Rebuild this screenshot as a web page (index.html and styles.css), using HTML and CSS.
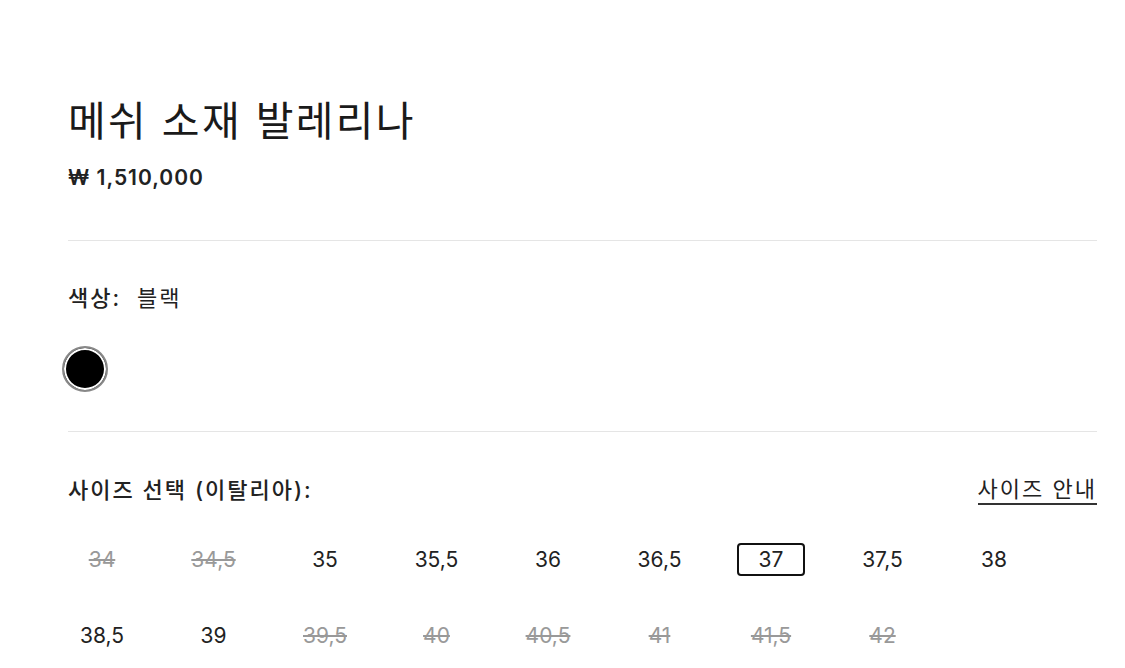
FILE: index.html
```html
<!DOCTYPE html>
<html lang="ko">
<head>
    <meta charset="UTF-8">
    <meta name="viewport" content="width=device-width, initial-scale=1.0">
    <title>메쉬 소재 발레리나</title>
    <link rel="stylesheet" href="styles.css">
</head>
<body>
    <div class="product">
        <h1 class="title">메쉬 소재 발레리나</h1>
        <p class="price">₩ 1,510,000</p>

        <div class="section colors">
            <p class="label">색상:&nbsp; <span class="value">블랙</span></p>
            <button class="swatch" aria-label="블랙"></button>
        </div>

        <div class="section sizes">
            <div class="sizes-head">
                <p class="label">사이즈 선택 (이탈리아):</p>
                <a class="guide" href="#">사이즈 안내</a>
            </div>
            <ul class="size-list">
                <li class="size off">34</li>
                <li class="size off">34,5</li>
                <li class="size">35</li>
                <li class="size">35,5</li>
                <li class="size">36</li>
                <li class="size">36,5</li>
                <li class="size selected">37</li>
                <li class="size">37,5</li>
                <li class="size">38</li>
                <li class="size">38,5</li>
                <li class="size">39</li>
                <li class="size off">39,5</li>
                <li class="size off">40</li>
                <li class="size off">40,5</li>
                <li class="size off">41</li>
                <li class="size off">41,5</li>
                <li class="size off">42</li>
            </ul>
        </div>
    </div>
</body>
</html>
```

FILE: styles.css
```css
html, body {
    margin: 0;
    padding: 0;
    background-color: #ffffff;
    color: #1a1a1a;
    font-family: Inter, "Noto Sans CJK KR", sans-serif;
}

.product {
    padding: 95px 28px 0 68px;
}

.title {
    margin: 0;
    font-size: 41px;
    font-weight: 400;
    line-height: 52px;
    letter-spacing: 2.3px;
}

.price {
    margin: 17px 0 0;
    font-size: 21px;
    font-weight: 600;
    line-height: 28px;
    letter-spacing: 1px;
    color: #222222;
}

.section {
    border-top: 1px solid #e5e5e5;
}

.colors {
    margin-top: 48px;
    padding: 43px 0 39px;
}

.label {
    margin: 0;
    font-size: 22px;
    font-weight: 500;
    line-height: 28px;
    letter-spacing: 2px;
    color: #222222;
}

.label .value {
    font-weight: 400;
}

.swatch {
    display: block;
    width: 46px;
    height: 46px;
    margin: 34px 0 0 -6px;
    padding: 0;
    border: 2px solid #888888;
    border-radius: 50%;
    background-color: #000000;
    box-shadow: inset 0 0 0 2px #ffffff;
    cursor: pointer;
}

.sizes {
    padding-top: 43px;
}

.sizes-head {
    display: flex;
    justify-content: space-between;
    align-items: center;
}

.guide {
    font-size: 22px;
    line-height: 28px;
    letter-spacing: 2px;
    color: #222222;
    text-decoration: none;
    border-bottom: 2px solid #333333;
}

.size-list {
    list-style: none;
    margin: 38px 0 0;
    padding: 0;
    display: flex;
    flex-wrap: wrap;
    column-gap: 43.5px;
    row-gap: 43px;
}

.size {
    width: 68px;
    height: 33px;
    box-sizing: border-box;
    display: flex;
    align-items: center;
    justify-content: center;
    font-size: 21px;
    color: #222222;
    border: 2px solid transparent;
    border-radius: 4px;
    cursor: pointer;
}

.size.off {
    color: #999999;
    text-decoration: line-through;
    text-decoration-thickness: 1.5px;
}

.size.selected {
    border-color: #111111;
}
```
